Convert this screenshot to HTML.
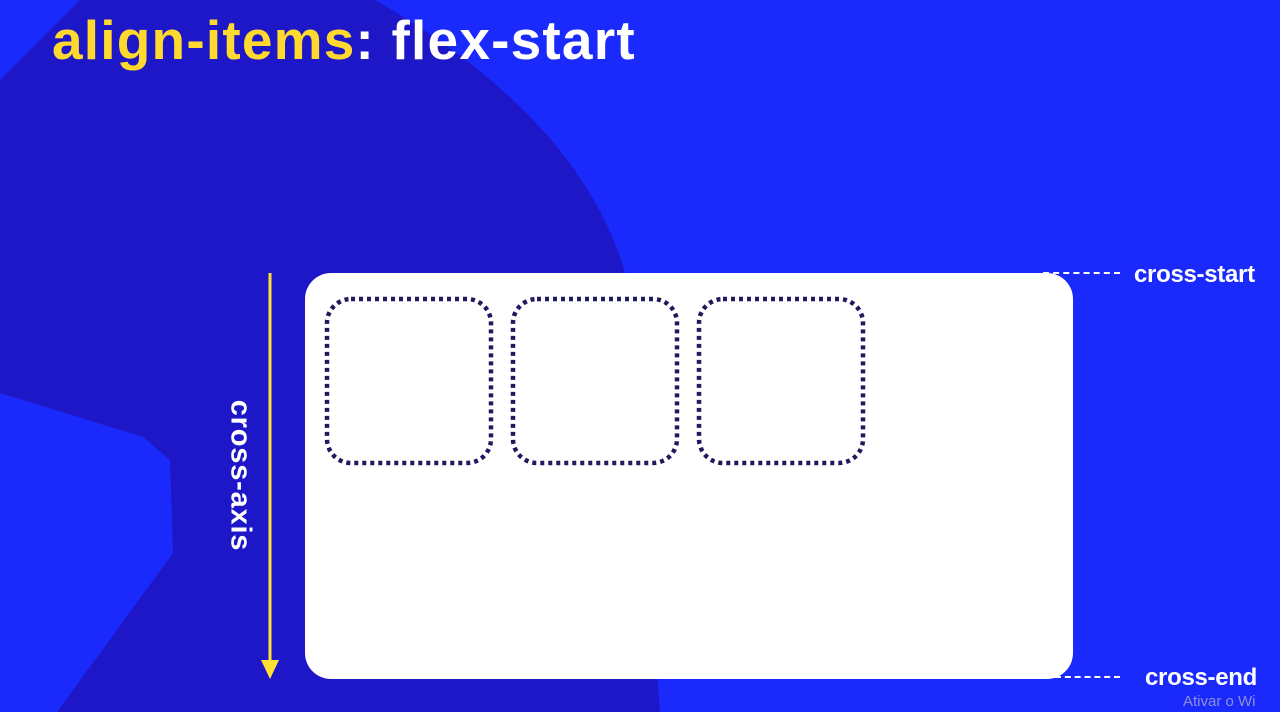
<!DOCTYPE html>
<html><head><meta charset="utf-8"><style>
*{margin:0;padding:0}
body{width:1280px;height:712px;overflow:hidden;background:#1b2afc;position:relative;font-family:"Liberation Sans",sans-serif}
.abs{position:absolute}
.card{left:305px;top:273px;width:768px;height:406px;background:#fff;border-radius:26px}
.lbl{color:#fff;font-weight:bold;font-size:24px;letter-spacing:-0.3px}
.dash{height:0;border-top:2px dashed #fff}
</style></head><body>
<svg class="abs" style="left:0;top:0" width="1280" height="712">
<path d="M0,80 L40,40 L80,0 L375,0 C480,60 590,150 625,273 L660,712 L57,712 L173,553 L170,460 L143,437 L0,393 Z" fill="#1e17c8"/>
</svg>
<div class="abs" style="left:52px;top:8px;font-size:55px;font-weight:bold;letter-spacing:1.2px;color:#fff;white-space:nowrap"><span style="color:#ffd92e">align-items</span>: flex-start</div>
<div class="abs card"></div>
<svg class="abs" style="left:0;top:0" width="1280" height="712" fill="none" stroke="#1f1a5e" stroke-width="4.5" stroke-dasharray="4 4">
<rect x="327" y="299" width="164" height="164" rx="24"/>
<rect x="513" y="299" width="164" height="164" rx="24"/>
<rect x="699" y="299" width="164" height="164" rx="24"/>
</svg>
<svg class="abs" style="left:258px;top:270px" width="24" height="412">
<line x1="12" y1="3" x2="12" y2="392" stroke="#ffe033" stroke-width="3"/>
<path d="M3,390 L21,390 L12,409 Z" fill="#ffe033"/>
</svg>
<div class="abs lbl" style="left:150px;top:459px;width:180px;text-align:center;transform:rotate(90deg);font-size:29px;letter-spacing:0.8px">cross-axis</div>
<div class="abs dash" style="left:1043px;top:272px;width:77px"></div>
<div class="abs dash" style="left:1055px;top:676px;width:65px"></div>
<div class="abs lbl" style="left:1134px;top:261px">cross-start</div>
<div class="abs lbl" style="left:1145px;top:664px">cross-end</div>
<div class="abs" style="left:1183px;top:693px;color:#8c90d8;font-size:15px">Ativar o Wi</div>
</body></html>
